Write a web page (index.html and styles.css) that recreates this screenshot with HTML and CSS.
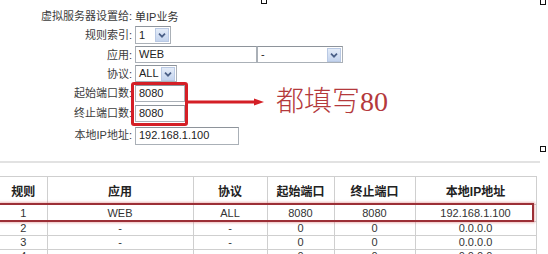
FILE: index.html
```html
<!DOCTYPE html>
<html lang="zh-CN">
<head>
  <meta charset="UTF-8">
  <title>虚拟服务器</title>
  <link rel="stylesheet" href="styles.css">
</head>
<body>
  <div class="page">
    <div class="form">
      <div class="label">虚拟服务器设置给:</div>
      <div class="value">单IP业务</div>

      <div class="label">规则索引:</div>
      <div class="value">
        <div class="select w36"><span>1</span><i class="drop"><svg viewBox="0 0 14 14"><path d="M3.5 5.5 L7 9 L10.5 5.5"/></svg></i></div>
      </div>

      <div class="label">应用:</div>
      <div class="value">
        <div class="field w122">WEB</div>
        <div class="select w86"><span>-</span><i class="drop"><svg viewBox="0 0 14 14"><path d="M3.5 5.5 L7 9 L10.5 5.5"/></svg></i></div>
      </div>

      <div class="label">协议:</div>
      <div class="value">
        <div class="select w42"><span>ALL</span><i class="drop"><svg viewBox="0 0 14 14"><path d="M3.5 5.5 L7 9 L10.5 5.5"/></svg></i></div>
      </div>

      <div class="label">起始端口数:</div>
      <div class="value"><div class="field w50">8080</div></div>

      <div class="label">终止端口数:</div>
      <div class="value"><div class="field w50">8080</div></div>

      <div class="label">本地IP地址:</div>
      <div class="value last"><div class="field w104">192.168.1.100</div></div>
    </div>

    <div class="divider"></div>

    <table class="rules">
      <colgroup>
        <col class="c1"><col class="c2"><col class="c3"><col class="c4"><col class="c5"><col class="c6">
      </colgroup>
      <tr>
        <th>规则</th><th>应用</th><th>协议</th><th>起始端口</th><th>终止端口</th><th>本地IP地址</th>
      </tr>
      <tr class="first">
        <td>1</td><td>WEB</td><td>ALL</td><td>8080</td><td>8080</td><td>192.168.1.100</td>
      </tr>
      <tr>
        <td>2</td><td>-</td><td>-</td><td>0</td><td>0</td><td>0.0.0.0</td>
      </tr>
      <tr>
        <td>3</td><td>-</td><td>-</td><td>0</td><td>0</td><td>0.0.0.0</td>
      </tr>
      <tr>
        <td>4</td><td>-</td><td>-</td><td>0</td><td>0</td><td>0.0.0.0</td>
      </tr>
    </table>

    <!-- annotations drawn over the screenshot -->
    <div class="port-mark"></div>
    <div class="arrow"><svg viewBox="0 0 76 10"><path class="shaft" d="M0 5 H68"/><path class="head" d="M66 1.5 L76 5 L66 8.5 Z"/></svg></div>
    <div class="note">都填写80</div>
    <div class="row-mark"></div>
    <div class="handle h1"></div>
    <div class="handle h2"></div>
    <div class="handle h3"></div>
  </div>
</body>
</html>
```

FILE: styles.css
```css
body {
  margin: 0;
  background: #fff;
  font-family: "Liberation Sans", "Noto Sans CJK SC", sans-serif;
  font-size: 12px;
  color: #333;
}
.page {
  position: relative;
  width: 548px;
  height: 254px;
  overflow: hidden;
}

/* form */
.form {
  display: grid;
  grid-template-columns: 134px 1fr;
  grid-template-rows: 19px 20px 19px 19px 20px 20px 23px;
  padding-top: 6px;
}
.label {
  text-align: right;
  align-self: center;
  padding-right: 2px;
  font-size: 11px;
  line-height: 14px;
  color: #3c3c3c;
}
.value {
  display: flex;
  align-items: center;
  padding-left: 1px;
  font-size: 11px;
  color: #333;
}
.value.last {
  align-items: flex-end;
  padding-bottom: 1px;
}
.field, .select {
  box-sizing: border-box;
  height: 17px;
  border: 1px solid #aab0b7;
  border-top-color: #8e949b;
  background: #fff;
  font-size: 11px;
  line-height: 15px;
  padding-left: 3px;
  color: #222;
}
.select {
  display: flex;
  align-items: center;
  justify-content: space-between;
  padding-right: 1px;
}
.w36 { width: 36px; height: 18px; }
.w42 { width: 42px; }
.w50 { width: 50px; }
.w86 { width: 86px; }
.w104 { width: 104px; height: 18px; }
.w122 { width: 122px; }
.drop {
  display: block;
  width: 14px;
  height: 14px;
  box-sizing: border-box;
  border: 1px solid #b9c9e4;
  background: linear-gradient(#e4ecf8, #c4d4ee);
}
.drop svg {
  display: block;
  width: 12px;
  height: 12px;
}
.drop path {
  fill: none;
  stroke: #4a5f86;
  stroke-width: 2;
}

/* divider */
.divider {
  width: 540px;
  height: 2px;
  margin-top: 15px;
  background: #e2e2e2;
}

/* table */
.rules {
  margin-top: 13px;
  width: 536px;
  border-collapse: collapse;
  table-layout: fixed;
}
.c1 { width: 47px; }
.c2 { width: 146px; }
.c3 { width: 74px; }
.c4 { width: 67px; }
.c5 { width: 81px; }
.c6 { width: 121px; }
.rules th, .rules td {
  border: 1px solid #cfcfcf;
  text-align: center;
  padding: 0;
}
.rules th {
  height: 27px;
  font-weight: bold;
  color: #222;
}
.rules td {
  height: 13px;
  line-height: 13px;
  font-size: 11px;
  color: #333;
}
.rules tr.first td {
  height: 16px;
}
.rules th:first-child, .rules td:first-child {
  border-left: none;
}

/* annotations */
.port-mark {
  position: absolute;
  left: 131px;
  top: 82px;
  width: 51px;
  height: 38px;
  border: 3px solid #d41f26;
  border-radius: 3px;
}
.arrow {
  position: absolute;
  left: 188px;
  top: 97px;
  width: 76px;
  height: 10px;
}
.arrow svg {
  display: block;
  width: 76px;
  height: 10px;
}
.arrow .shaft {
  stroke: #d41f26;
  stroke-width: 3;
}
.arrow .head {
  fill: #d41f26;
}
.note {
  position: absolute;
  left: 276px;
  top: 86px;
  font-family: "Liberation Serif", "Noto Sans CJK SC", serif;
  font-size: 28px;
  font-weight: 300;
  line-height: 32px;
  color: #b4393c;
}
.row-mark {
  position: absolute;
  left: 0;
  top: 203px;
  width: 532px;
  height: 15px;
  border: 2px solid #9c2f36;
  border-left: none;
  box-shadow: 0 0 2px 1px rgba(220, 120, 120, 0.5);
}
.handle {
  position: absolute;
  width: 4px;
  height: 4px;
  border: 1px solid #111;
  background: #fff;
}
.h1 { left: 261px; top: -2px; }
.h2 { left: 540px; top: -1px; }
.h3 { left: 540px; top: 146px; }
```
